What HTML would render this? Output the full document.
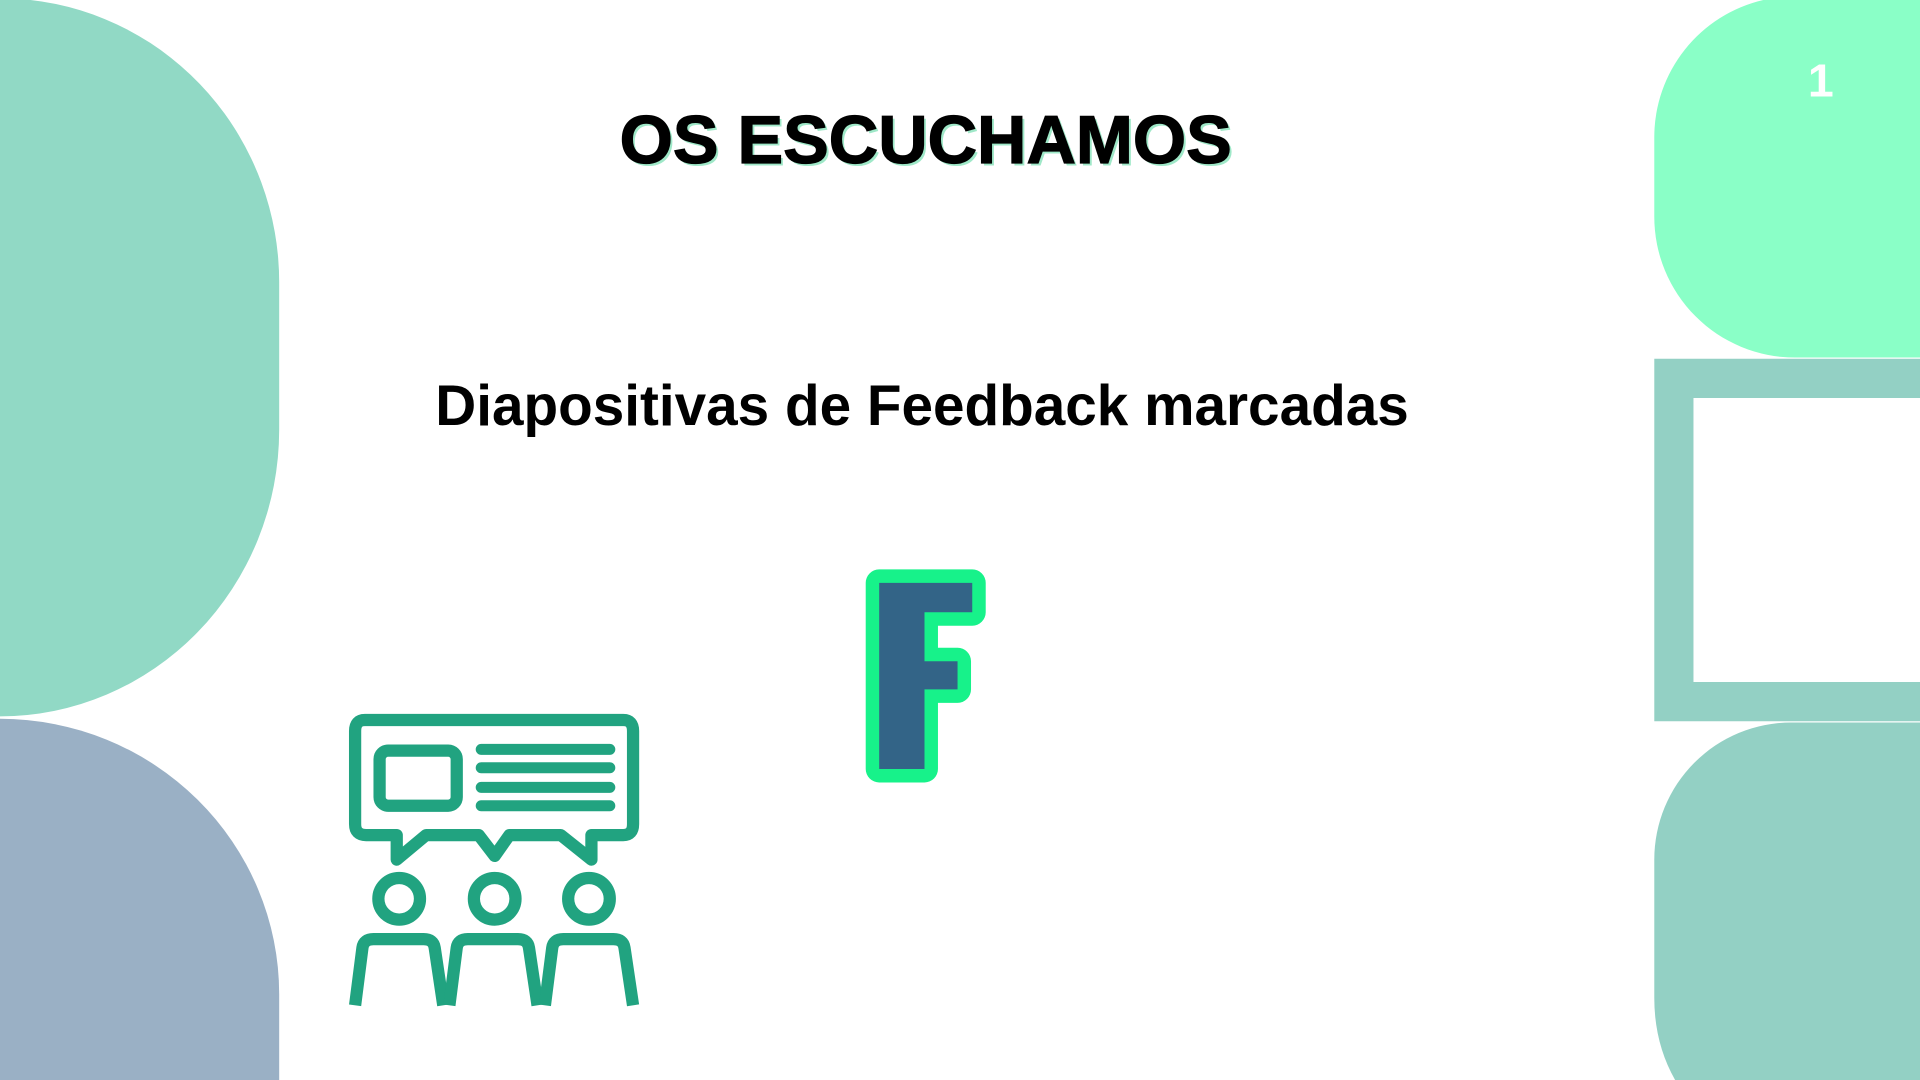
<!DOCTYPE html>
<html><head><meta charset="utf-8"><style>
html,body{margin:0;padding:0;background:#fff;overflow:hidden;width:1920px;height:1080px}
svg{display:block}
</style></head><body>
<svg width="1920" height="1080" viewBox="0 0 1568 882" xmlns="http://www.w3.org/2000/svg">
<path d="M0,0 H25 A228,232 0 0 1 228,232 V351 A228,234 0 0 1 0,585 Z" fill="#91d9c5"/>
<path d="M0,587 A228,225 0 0 1 228,812 V882 H0 Z" fill="#9ab0c5"/>
<path d="M1568,0 V292 H1466 A115,115 0 0 1 1351,177 V112 A115,115 0 0 1 1440,0 Z" fill="#8affc7"/>
<path d="M1351,293 H1568 V589 H1351 Z M1383,325 V557 H1568 V325 Z" fill="#93d0c4" fill-rule="evenodd"/>
<path d="M1568,590 H1463 A112,112 0 0 0 1351,702 V815 Q1351,852 1368,882 H1568 Z" fill="#93d0c4"/>
<text x="1487" y="79" text-anchor="middle" font-family="Liberation Sans, sans-serif" font-weight="bold" font-size="38" fill="#fff">1</text>
<g font-family="Liberation Sans, sans-serif" font-weight="bold" text-anchor="middle">
<text x="758" y="135" font-size="55" fill="#9fe8c8" textLength="500" lengthAdjust="spacingAndGlyphs">OS ESCUCHAMOS</text>
<text x="756" y="133" font-size="55" fill="#000" stroke="#000" stroke-width="1" textLength="500" lengthAdjust="spacingAndGlyphs">OS ESCUCHAMOS</text>
<text x="753" y="347" font-size="47" fill="#000" textLength="795" lengthAdjust="spacingAndGlyphs">Diapositivas de Feedback marcadas</text>
</g>
<path d="M718,476 H794 V500 H755 V540 H782 V563 H755 V628 H718 Z" fill="#336487" stroke="#17f28a" stroke-width="22" stroke-linejoin="round"/>
<path d="M718,476 H794 V500 H755 V540 H782 V563 H755 V628 H718 Z" fill="#336487"/>
<g fill="none" stroke="#21a380" stroke-width="10" stroke-linejoin="round">
<path d="M298,588 H509 Q517,588 517,597 V673 Q517,682 509,682 H483 V702 L458,682 H416 L404,699 L391,682 H348 L324,702 V682 H299 Q290,682 290,673 V597 Q290,588 298,588 Z"/>
<rect x="310" y="613" width="63" height="45" rx="7"/>
<path d="M393,612 H498 M393,627 H498 M393,643 H498 M393,658 H498" stroke-width="9" stroke-linecap="round"/>
<circle cx="326" cy="734" r="17"/>
<circle cx="404" cy="734" r="17"/>
<circle cx="481" cy="734" r="17"/>
<path d="M290,821 L296,774 Q297,767 305,767 L346,767 Q354,767 355,774 L362,821"/>
<path d="M367,821 L373,774 Q374,767 382,767 L423,767 Q431,767 432,774 L439,821"/>
<path d="M445,821 L451,774 Q452,767 460,767 L501,767 Q509,767 510,774 L517,821"/>
</g>
</svg>
</body></html>
